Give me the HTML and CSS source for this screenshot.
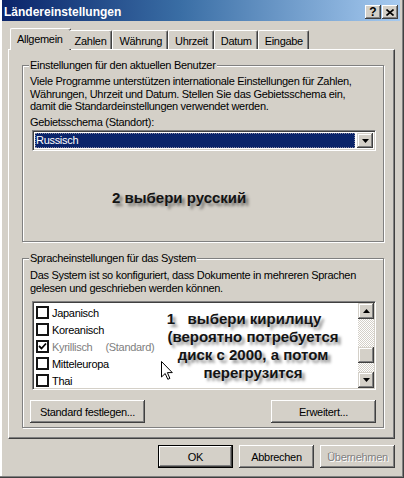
FILE: index.html
```html
<!DOCTYPE html>
<html lang="de">
<head>
    <meta charset="UTF-8">
    <title>Ländereinstellungen</title>
    <link rel="stylesheet" href="styles.css">
</head>
<body>

<div class="window">
    <div class="titlebar">
        <span class="title">Ländereinstellungen</span>
        <div class="caption-buttons">
            <span class="cap-btn help">?</span>
            <span class="cap-btn">
                <svg width="8" height="7" viewBox="0 0 8 7"><path d="M0.5 0.5 L7.5 6.5 M7.5 0.5 L0.5 6.5" stroke="#000" stroke-width="1.6"/></svg>
            </span>
        </div>
    </div>

    <div class="tabs">
        <div class="tab active">Allgemein</div>
        <div class="tab">Zahlen</div>
        <div class="tab">Währung</div>
        <div class="tab">Uhrzeit</div>
        <div class="tab">Datum</div>
        <div class="tab">Eingabe</div>
    </div>

    <div class="panel">
        <div class="group group-user">
            <span class="group-title">Einstellungen für den aktuellen Benutzer</span>
            <p class="text">Viele Programme unterstützen internationale Einstellungen für Zahlen,<br>
                Währungen, Uhrzeit und Datum. Stellen Sie das Gebietsschema ein,<br>
                damit die Standardeinstellungen verwendet werden.</p>
            <label class="label">Gebietsschema (Standort):</label>
            <div class="combo">
                <span class="combo-value">Russisch</span>
                <span class="arrow-btn">
                    <svg width="7" height="4" viewBox="0 0 7 4"><path d="M0 0 H7 L3.5 4 Z" fill="#000"/></svg>
                </span>
            </div>
            <div class="note note-ru">2 выбери русский</div>
        </div>

        <div class="group group-system">
            <span class="group-title">Spracheinstellungen für das System</span>
            <p class="text">Das System ist so konfiguriert, dass Dokumente in mehreren Sprachen<br>
                gelesen und geschrieben werden können.</p>
            <div class="listbox">
                <ul class="items">
                    <li><span class="check"></span>Japanisch</li>
                    <li><span class="check"></span>Koreanisch</li>
                    <li class="disabled">
                        <span class="check">
                            <svg width="9" height="9" viewBox="0 0 9 9"><path d="M1 4 L3.5 6.5 L8 1.5" stroke="#000" stroke-width="1.8" fill="none"/></svg>
                        </span>Kyrillisch<span class="std">(Standard)</span>
                    </li>
                    <li><span class="check"></span>Mitteleuropa</li>
                    <li><span class="check"></span>Thai</li>
                </ul>
                <div class="scrollbar">
                    <span class="arrow-btn">
                        <svg width="7" height="4" viewBox="0 0 7 4"><path d="M0 4 H7 L3.5 0 Z" fill="#000"/></svg>
                    </span>
                    <div class="track"><span class="thumb"></span></div>
                    <span class="arrow-btn">
                        <svg width="7" height="4" viewBox="0 0 7 4"><path d="M0 0 H7 L3.5 4 Z" fill="#000"/></svg>
                    </span>
                </div>
                <div class="note note-list"><span class="first-line">1&nbsp;&nbsp; выбери кирилицу</span><br>(вероятно потребуется<br>диск с 2000, а потом<br>перегрузится</div>
                <svg class="pointer" width="12" height="19" viewBox="0 0 12 19">
                    <path d="M0.5 0.5 V16 L4.2 12.5 L6.8 18.3 L8.9 17.4 L6.4 11.6 H11.3 Z" fill="#fff" stroke="#000" stroke-width="1"/>
                </svg>
            </div>
            <div class="group-buttons">
                <button class="btn btn-std">Standard festlegen...</button>
                <button class="btn btn-adv">Erweitert...</button>
            </div>
        </div>
    </div>

    <div class="dialog-buttons">
        <button class="btn default">OK</button>
        <button class="btn">Abbrechen</button>
        <button class="btn disabled">Übernehmen</button>
    </div>
</div>

</body>
</html>
```

FILE: styles.css
```css
* {
    box-sizing: border-box;
}
body {
    margin: 0;
    background-color: #d4d0c8;
    font-family: "Liberation Sans", Arial, sans-serif;
    font-size: 11px;
    letter-spacing: -0.3px;
    color: #000;
}
.window {
    width: 404px;
    height: 478px;
    display: flex;
    flex-direction: column;
    padding: 0 4px 2px 2px;
    background-color: #d4d0c8;
    box-shadow: inset -1px -1px #404040, inset -2px -2px #808080, inset 2px 0 #fff;
}

/* title bar */
.titlebar {
    height: 21px;
    padding: 3px 2px 0 2px;
    display: flex;
    align-items: center;
    justify-content: space-between;
    background: linear-gradient(to right, #0a246a, #3a6ea5 45%, #a6caf0);
}
.title {
    color: #fff;
    font-weight: bold;
    font-size: 12px;
    letter-spacing: 0;
}
.caption-buttons {
    display: flex;
    gap: 1px;
}
.cap-btn {
    width: 16px;
    height: 14px;
    display: flex;
    align-items: center;
    justify-content: center;
    background-color: #d4d0c8;
    box-shadow: inset -1px -1px #404040, inset 1px 1px #fff, inset -2px -2px #808080;
    font-weight: bold;
    font-size: 12px;
    letter-spacing: 0;
}

/* tabs */
.tabs {
    display: flex;
    align-items: flex-end;
    height: 21px;
    margin: 7px 5px 0 6px;
    padding-left: 4px;
    position: relative;
    z-index: 1;
}
.tab {
    height: 19px;
    padding: 2px 5px 0 6px;
    line-height: 16px;
    border-top: 1px solid #fff;
    border-left: 1px solid #fff;
    border-right: 1px solid #404040;
    border-radius: 2px 2px 0 0;
    box-shadow: inset -1px 0 #808080;
    background-color: #d4d0c8;
}
.tab.active {
    height: 22px;
    margin: 0 -2px -1px -2px;
    padding: 2px 7px 0 6px;
}
.tab.active + .tab {
    border-left: none;
}

/* panel */
.panel {
    height: 390px;
    margin: 0 5px 0 6px;
    padding: 15px 10px 0 13px;
    border-top: 1px solid #fff;
    border-left: 1px solid #fff;
    border-right: 1px solid #404040;
    border-bottom: 1px solid #404040;
    box-shadow: inset -1px -1px #808080;
}
.group {
    position: relative;
    border: 1px solid #808080;
    box-shadow: inset 1px 1px #fff, 1px 1px #fff;
    padding: 9px 7px 0 7px;
}
.group-user {
    height: 177px;
}
.group-system {
    height: 170px;
    margin-top: 16px;
}
.group-title {
    position: absolute;
    top: -7px;
    left: 6px;
    padding: 0 1px 0 1px;
    line-height: 13px;
    background-color: #d4d0c8;
}
.text {
    margin: 0;
    line-height: 12.5px;
}
.group-system .text {
    padding-top: 1px;
}
.label {
    display: block;
    margin-top: 3px;
    line-height: 12.5px;
}

/* combo box */
.combo {
    display: flex;
    height: 21px;
    margin: 2px 0 0 2px;
    background-color: #fff;
    border-top: 1px solid #808080;
    border-left: 1px solid #808080;
    border-right: 1px solid #fff;
    border-bottom: 1px solid #fff;
    box-shadow: inset 1px 1px #404040, inset -1px -1px #d4d0c8;
    padding: 2px;
}
.combo-value {
    flex: 1;
    margin: 0 2px 0 0;
    padding-left: 1px;
    line-height: 15px;
    color: #fff;
    background-color: #0a246a;
    outline: 1px dotted #8a8aa0;
    outline-offset: -1px;
}
.arrow-btn {
    width: 16px;
    height: 16px;
    flex: none;
    display: flex;
    align-items: center;
    justify-content: center;
    background-color: #d4d0c8;
    box-shadow: inset -1px -1px #404040, inset 1px 1px #d4d0c8, inset -2px -2px #808080, inset 2px 2px #fff;
}
.combo .arrow-btn {
    height: 15px;
}

/* hand written notes */
.note {
    font-family: "Liberation Sans", Arial, sans-serif;
    font-weight: bold;
    font-size: 15px;
    letter-spacing: 0;
    line-height: 18px;
    color: #141414;
    text-shadow: 3px 3px 3px rgba(0, 0, 0, 0.45);
}
.note-ru {
    margin: 38px 0 0 82px;
}

/* list box */
.listbox {
    position: relative;
    display: flex;
    height: 89px;
    margin: 7px 0 0 2px;
    background-color: #fff;
    border-top: 1px solid #808080;
    border-left: 1px solid #808080;
    border-right: 1px solid #fff;
    border-bottom: 1px solid #fff;
    box-shadow: inset 1px 1px #404040, inset -1px -1px #d4d0c8;
    padding: 1px;
}
.items {
    flex: 1;
    list-style: none;
    margin: 0;
    padding: 1px 0 0 2px;
}
.items li {
    height: 17px;
    display: flex;
    align-items: center;
}
.check {
    width: 13px;
    height: 13px;
    margin-right: 3px;
    display: flex;
    align-items: center;
    justify-content: center;
    background-color: #fff;
    border: 2px solid #141414;
}
.items li.disabled {
    color: #808080;
}
.std {
    margin-left: 13px;
}
.scrollbar {
    width: 16px;
    display: flex;
    flex-direction: column;
}
.track {
    flex: 1;
    background: repeating-conic-gradient(#d4d0c8 0 25%, #fff 0 50%) 0 0 / 2px 2px;
}
.thumb {
    display: block;
    height: 16px;
    margin-top: 28px;
    background-color: #d4d0c8;
    box-shadow: inset -1px -1px #404040, inset 1px 1px #d4d0c8, inset -2px -2px #808080, inset 2px 2px #fff;
}
.note-list {
    position: absolute;
    left: 110px;
    top: 8px;
    width: 220px;
    text-align: center;
}
.first-line {
    margin-right: 18px;
}
.pointer {
    position: absolute;
    left: 128px;
    top: 59px;
}

/* buttons */
.btn {
    height: 23px;
    padding: 0;
    font-family: "Liberation Sans", Arial, sans-serif;
    font-size: 11px;
    letter-spacing: -0.3px;
    color: #000;
    background-color: #d4d0c8;
    border: none;
    box-shadow: inset -1px -1px #404040, inset 1px 1px #fff, inset -2px -2px #808080, inset 2px 2px #d4d0c8;
}
.group-buttons {
    display: flex;
    justify-content: space-between;
    margin-top: 10px;
}
.btn-std {
    width: 115px;
}
.btn-adv {
    width: 105px;
}
.dialog-buttons {
    display: flex;
    justify-content: flex-end;
    gap: 6px;
    margin: 6px 5px 0 0;
}
.dialog-buttons .btn {
    width: 75px;
}
.btn.default {
    border: 1px solid #000;
    box-shadow: inset -1px -1px #404040, inset 1px 1px #fff, inset -2px -2px #808080;
}
.btn.disabled {
    color: #808080;
    text-shadow: 1px 1px #fff;
}
```
